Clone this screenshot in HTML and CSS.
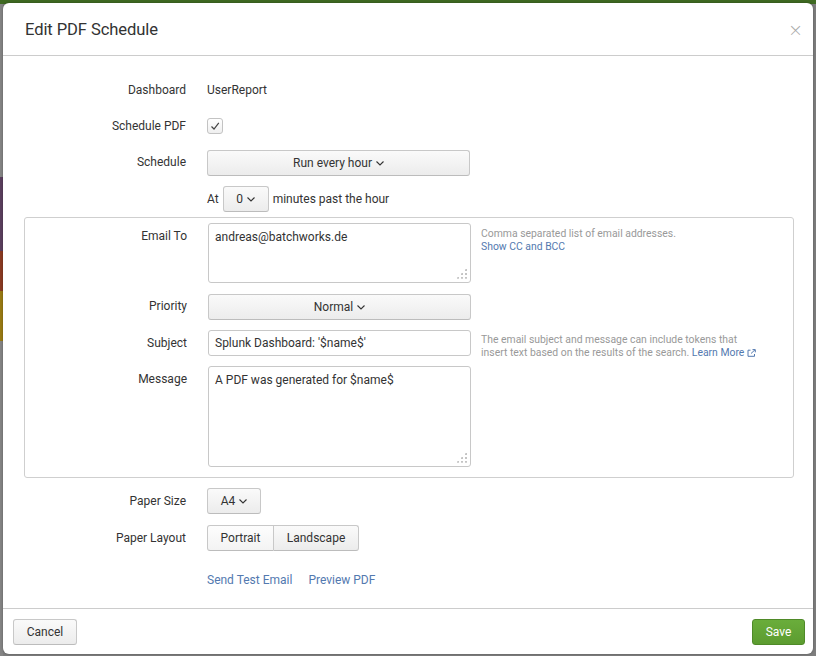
FILE: index.html
```html
<!DOCTYPE html>
<html>
<head>
<meta charset="utf-8">
<title>Edit PDF Schedule</title>
<link rel="stylesheet" href="styles.css">
</head>
<body>
<div class="backdrop-strip"></div>
<div class="modal">
  <div class="modal-header">
    <h3 class="modal-title">Edit PDF Schedule</h3>
    <span class="close">&times;</span>
  </div>
  <div class="modal-body">
    <div class="row">
      <label class="lbl">Dashboard</label>
      <div class="ctl text">UserReport</div>
    </div>
    <div class="row">
      <label class="lbl">Schedule PDF</label>
      <div class="ctl">
        <span class="checkbox"><svg width="10" height="10" viewBox="0 0 10 10"><path d="M1.5 5.5 L4 8 L8.8 1.8" fill="none" stroke="#444" stroke-width="1.2"/></svg></span>
      </div>
    </div>
    <div class="row">
      <label class="lbl">Schedule</label>
      <div class="ctl">
        <button class="btn btn-wide">Run every hour <svg class="chev" width="8" height="5" viewBox="0 0 8 5"><path d="M0.5 0.5 L4 4 L7.5 0.5" fill="none" stroke="#333" stroke-width="1.1"/></svg></button>
      </div>
    </div>
    <div class="row">
      <label class="lbl"></label>
      <div class="ctl inline">
        <span class="text">At</span>
        <button class="btn btn-small">0 <svg class="chev" width="8" height="5" viewBox="0 0 8 5"><path d="M0.5 0.5 L4 4 L7.5 0.5" fill="none" stroke="#333" stroke-width="1.1"/></svg></button>
        <span class="text">minutes past the hour</span>
      </div>
    </div>

    <div class="email-box">
      <div class="row">
        <label class="lbl">Email To</label>
        <div class="ctl">
          <div class="area area-email">andreas@batchworks.de<span class="grip"></span></div>
        </div>
        <div class="help">Comma separated list of email addresses.<br><a class="link" href="#">Show CC and BCC</a></div>
      </div>
      <div class="row">
        <label class="lbl">Priority</label>
        <div class="ctl">
          <button class="btn btn-wide">Normal <svg class="chev" width="8" height="5" viewBox="0 0 8 5"><path d="M0.5 0.5 L4 4 L7.5 0.5" fill="none" stroke="#333" stroke-width="1.1"/></svg></button>
        </div>
      </div>
      <div class="row">
        <label class="lbl">Subject</label>
        <div class="ctl">
          <div class="input">Splunk Dashboard: '$name$'</div>
        </div>
        <div class="help help-two">The email subject and message can include tokens that<br>insert text based on the results of the search. <a class="link" href="#">Learn More <svg width="9" height="8" viewBox="0 0 9 8"><path d="M3.5 1.2 H1 V7.3 H7.5 V5" fill="none" stroke="#5379af" stroke-width="1"/><path d="M4 4.5 L8 0.8 M5.5 0.6 H8.3 V3.3" fill="none" stroke="#5379af" stroke-width="1"/></svg></a></div>
      </div>
      <div class="row last">
        <label class="lbl">Message</label>
        <div class="ctl">
          <div class="area area-msg">A PDF was generated for $name$<span class="grip"></span></div>
        </div>
      </div>
    </div>

    <div class="row">
      <label class="lbl">Paper Size</label>
      <div class="ctl">
        <button class="btn btn-a4">A4 <svg class="chev" width="8" height="5" viewBox="0 0 8 5"><path d="M0.5 0.5 L4 4 L7.5 0.5" fill="none" stroke="#333" stroke-width="1.1"/></svg></button>
      </div>
    </div>
    <div class="row layout-row">
      <label class="lbl">Paper Layout</label>
      <div class="ctl">
        <div class="btn-group">
          <button class="btn seg active">Portrait</button><button class="btn seg">Landscape</button>
        </div>
      </div>
    </div>
    <div class="row links">
      <label class="lbl"></label>
      <div class="ctl inline">
        <a class="link link-lg" href="#">Send Test Email</a>
        <a class="link link-lg" href="#">Preview PDF</a>
      </div>
    </div>
  </div>
  <div class="modal-footer">
    <button class="btn btn-foot">Cancel</button>
    <button class="btn btn-save">Save</button>
  </div>
</div>
</body>
</html>
```

FILE: styles.css
```css
html, body {
  margin: 0;
  padding: 0;
}
body {
  width: 816px;
  height: 656px;
  overflow: hidden;
  background: linear-gradient(to bottom, #3f6a22 0, #3f6a22 4px, #7e7e7e 4px, #7e7e7e 100%);
  font-family: Roboto, "Liberation Sans", sans-serif;
  font-size: 12px;
  color: #333;
  position: relative;
}
.backdrop-strip {
  position: absolute;
  left: 0;
  top: 4px;
  width: 3px;
  height: 652px;
  background: linear-gradient(to bottom,
    #858585 0, #858585 173px,
    #5b3f5e 173px, #5b3f5e 247px,
    #8b3b22 247px, #8b3b22 287px,
    #9a7b14 287px, #9a7b14 337px,
    #858585 337px);
}
.modal {
  position: relative;
  margin: 3px 0 0 3px;
  width: 810px;
  height: 651px;
  background: #fff;
  border-radius: 6px;
  box-sizing: border-box;
  display: flex;
  flex-direction: column;
  box-shadow: 0 0 3px rgba(0,0,0,0.3);
}
.modal-header {
  height: 52px;
  border-bottom: 1px solid #ccc;
  display: flex;
  align-items: center;
  justify-content: space-between;
  padding: 0 10px 0 22px;
  flex: none;
}
.modal-title {
  margin: 0;
  font-weight: normal;
  font-size: 16.6px;
  color: #333;
  letter-spacing: -0.1px;
  padding-top: 1px;
}
.close {
  font-size: 18px;
  color: #aaa;
  line-height: 1;
  font-family: "DejaVu Sans", sans-serif;
  font-weight: 300;
  margin-top: 2px;
}
.modal-body {
  flex: 1;
  padding: 21px 19px 0 21px;
}
.row {
  display: flex;
  align-items: flex-start;
  margin-bottom: 10px;
}
.lbl {
  width: 162px;
  flex: none;
  text-align: right;
  line-height: 25px;
  height: 26px;
  padding-top: 1px;
  box-sizing: border-box;
  margin-right: 21px;
  color: #333;
}
.ctl {
  line-height: 26px;
}
.ctl.inline {
  display: flex;
  align-items: center;
  gap: 4px;
  height: 26px;
}
.text {
  line-height: 25px;
  padding-top: 1px;
  height: 26px;
  box-sizing: border-box;
}
.checkbox {
  display: inline-flex;
  align-items: center;
  justify-content: center;
  width: 14px;
  height: 14px;
  border: 1px solid #c3c3c3;
  border-radius: 3px;
  background: linear-gradient(#fff, #efefef);
  vertical-align: middle;
  margin-top: -2px;
}
.btn {
  font-family: Roboto, "Liberation Sans", sans-serif;
  font-size: 12px;
  color: #333;
  height: 26px;
  border: 1px solid #c8c8c8;
  border-bottom-color: #bcbcbc;
  border-radius: 3px;
  background: linear-gradient(#fafafa, #ececec);
  padding: 0 12px;
  display: inline-flex;
  align-items: center;
  justify-content: center;
  gap: 4px;
  box-sizing: border-box;
  vertical-align: middle;
}
.chev {
  margin-top: 1px;
}
.btn-wide {
  width: 263px;
}
.btn-small {
  width: 46px;
  padding: 0;
  margin-right: 0;
}
.btn-a4 {
  width: 54px;
  padding: 0;
}
.btn-group {
  display: inline-flex;
}
.seg {
  border-radius: 0;
  padding: 0 12px;
}
.seg:first-child {
  border-radius: 3px 0 0 3px;
  width: 67px;
  background: linear-gradient(#fdfdfd, #f3f3f3);
}
.seg:last-child {
  border-radius: 0 3px 3px 0;
  border-left: none;
  width: 85px;
}
.layout-row {
  margin-top: 11px;
}
.email-box {
  border: 1px solid #cfcfcf;
  border-radius: 3px;
  padding: 5px 0 10px;
  margin: -5px 0 10px;
}
.email-box .row.last {
  margin-bottom: 0;
}
.area, .input {
  position: relative;
  width: 263px;
  border: 1px solid #c8c8c8;
  border-radius: 3px;
  box-sizing: border-box;
  padding: 6px 6px;
  line-height: 14px;
  background: #fff;
  color: #333;
}
.area-email {
  height: 60px;
}
.area-msg {
  height: 101px;
}
.input {
  height: 26px;
  padding: 5px 6px;
}
.grip {
  position: absolute;
  right: 3px;
  bottom: 3px;
  width: 11px;
  height: 11px;
  background:
    radial-gradient(circle, #c4c4c4 1.1px, transparent 1.3px) 0 0 / 4px 4px;
  clip-path: polygon(100% 0, 100% 100%, 0 100%);
}
.help {
  margin-left: 10px;
  margin-top: 4px;
  margin-bottom: -10px;
  font-size: 10.4px;
  line-height: 13px;
  color: #999;
  white-space: nowrap;
}
.help-two {
  margin-top: 3px;
}
.link {
  color: #5379af;
  text-decoration: none;
}
.link svg {
  vertical-align: -1px;
}
.links {
  margin-top: 16px;
}
.links .ctl.inline {
  gap: 16px;
}
.link-lg {
  font-size: 12px;
}
.modal-footer {
  flex: none;
  height: 46px;
  border-top: 1px solid #ccc;
  display: flex;
  align-items: center;
  justify-content: space-between;
  padding: 1px 8px 0 10px;
  box-sizing: border-box;
}
.btn-foot {
  width: 64px;
  padding: 0;
}
.btn-save {
  width: 53px;
  padding: 0;
  color: #fff;
  background: linear-gradient(#6aad3b, #5c9c30);
  border: 1px solid #4f8a28;
}
```
